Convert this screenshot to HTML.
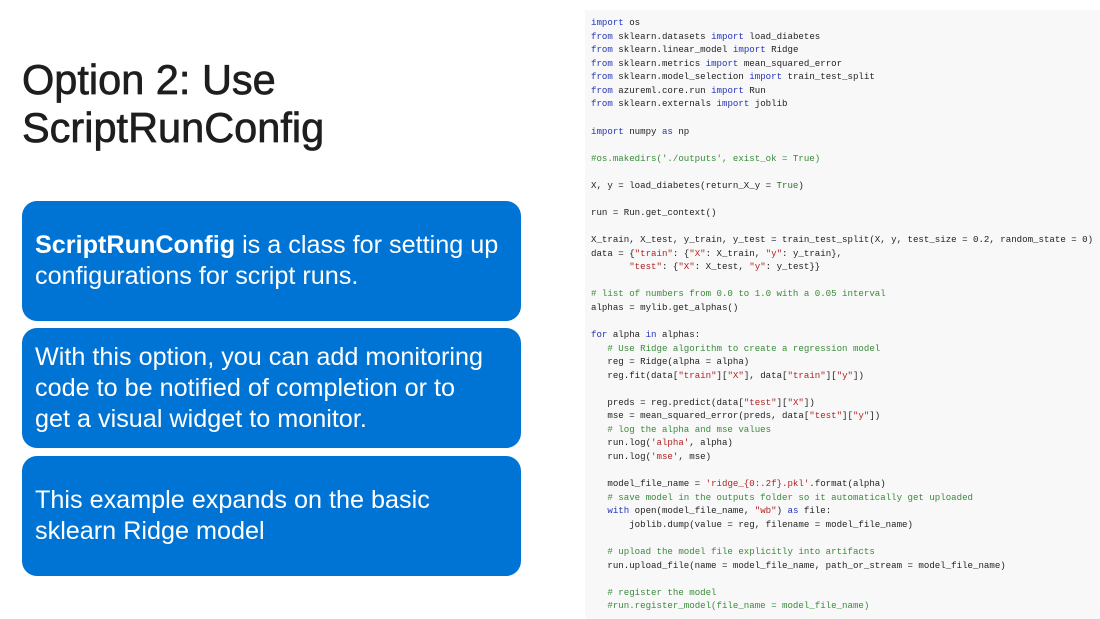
<!DOCTYPE html><html><head><style>
body{margin:0;width:1100px;height:619px;background:#fff;position:relative;overflow:hidden;font-family:"Liberation Sans",sans-serif}
h1{position:absolute;left:22px;top:56px;margin:0;font-size:41.5px;font-weight:normal;line-height:48px;color:#1e1e1e;-webkit-text-stroke:0.7px #1e1e1e}
.b{position:absolute;left:22px;width:499px;height:120px;background:#0074d4;border-radius:15px;color:#fff;font-size:25.2px;line-height:31px;box-sizing:border-box;padding:0 10px 0 13px;display:flex;align-items:center;white-space:nowrap}
.code{position:absolute;left:585px;top:10px;width:515px;height:609px;background:#f8f8f8}
pre{position:absolute;left:591px;top:16px;margin:0;font-family:"Liberation Mono",monospace;font-size:9.1px;line-height:13.56px;color:#222}
.k{color:#2233bb}.s{color:#b22222}.c{color:#3a8a3a}.t{color:#2a7a2a}
</style></head><body>
<h1>Option 2: Use<br>ScriptRunConfig</h1>
<div class="b" style="top:201px"><div><b>ScriptRunConfig</b> is a class for setting up<br>configurations for script runs.</div></div>
<div class="b" style="top:328px"><div>With this option, you can add monitoring<br>code to be notified of completion or to<br>get a visual widget to monitor.</div></div>
<div class="b" style="top:456px"><div>This example expands on the basic<br>sklearn Ridge model</div></div>
<div class="code"></div>
<pre><span class="k">import</span> os
<span class="k">from</span> sklearn.datasets <span class="k">import</span> load_diabetes
<span class="k">from</span> sklearn.linear_model <span class="k">import</span> Ridge
<span class="k">from</span> sklearn.metrics <span class="k">import</span> mean_squared_error
<span class="k">from</span> sklearn.model_selection <span class="k">import</span> train_test_split
<span class="k">from</span> azureml.core.run <span class="k">import</span> Run
<span class="k">from</span> sklearn.externals <span class="k">import</span> joblib

<span class="k">import</span> numpy <span class="k">as</span> np

<span class="c">#os.makedirs('./outputs', exist_ok = True)</span>

X, y = load_diabetes(return_X_y = <span class="t">True</span>)

run = Run.get_context()

X_train, X_test, y_train, y_test = train_test_split(X, y, test_size = 0.2, random_state = 0)
data = {<span class="s">"train"</span>: {<span class="s">"X"</span>: X_train, <span class="s">"y"</span>: y_train},
       <span class="s">"test"</span>: {<span class="s">"X"</span>: X_test, <span class="s">"y"</span>: y_test}}

<span class="c"># list of numbers from 0.0 to 1.0 with a 0.05 interval</span>
alphas = mylib.get_alphas()

<span class="k">for</span> alpha <span class="k">in</span> alphas:
   <span class="c"># Use Ridge algorithm to create a regression model</span>
   reg = Ridge(alpha = alpha)
   reg.fit(data[<span class="s">"train"</span>][<span class="s">"X"</span>], data[<span class="s">"train"</span>][<span class="s">"y"</span>])

   preds = reg.predict(data[<span class="s">"test"</span>][<span class="s">"X"</span>])
   mse = mean_squared_error(preds, data[<span class="s">"test"</span>][<span class="s">"y"</span>])
   <span class="c"># log the alpha and mse values</span>
   run.log(<span class="s">'alpha'</span>, alpha)
   run.log(<span class="s">'mse'</span>, mse)

   model_file_name = <span class="s">'ridge_{0:.2f}.pkl'</span>.format(alpha)
   <span class="c"># save model in the outputs folder so it automatically get uploaded</span>
   <span class="k">with</span> open(model_file_name, <span class="s">"wb"</span>) <span class="k">as</span> file:
       joblib.dump(value = reg, filename = model_file_name)

   <span class="c"># upload the model file explicitly into artifacts</span>
   run.upload_file(name = model_file_name, path_or_stream = model_file_name)

   <span class="c"># register the model</span>
   <span class="c">#run.register_model(file_name = model_file_name)</span></pre>
</body></html>
